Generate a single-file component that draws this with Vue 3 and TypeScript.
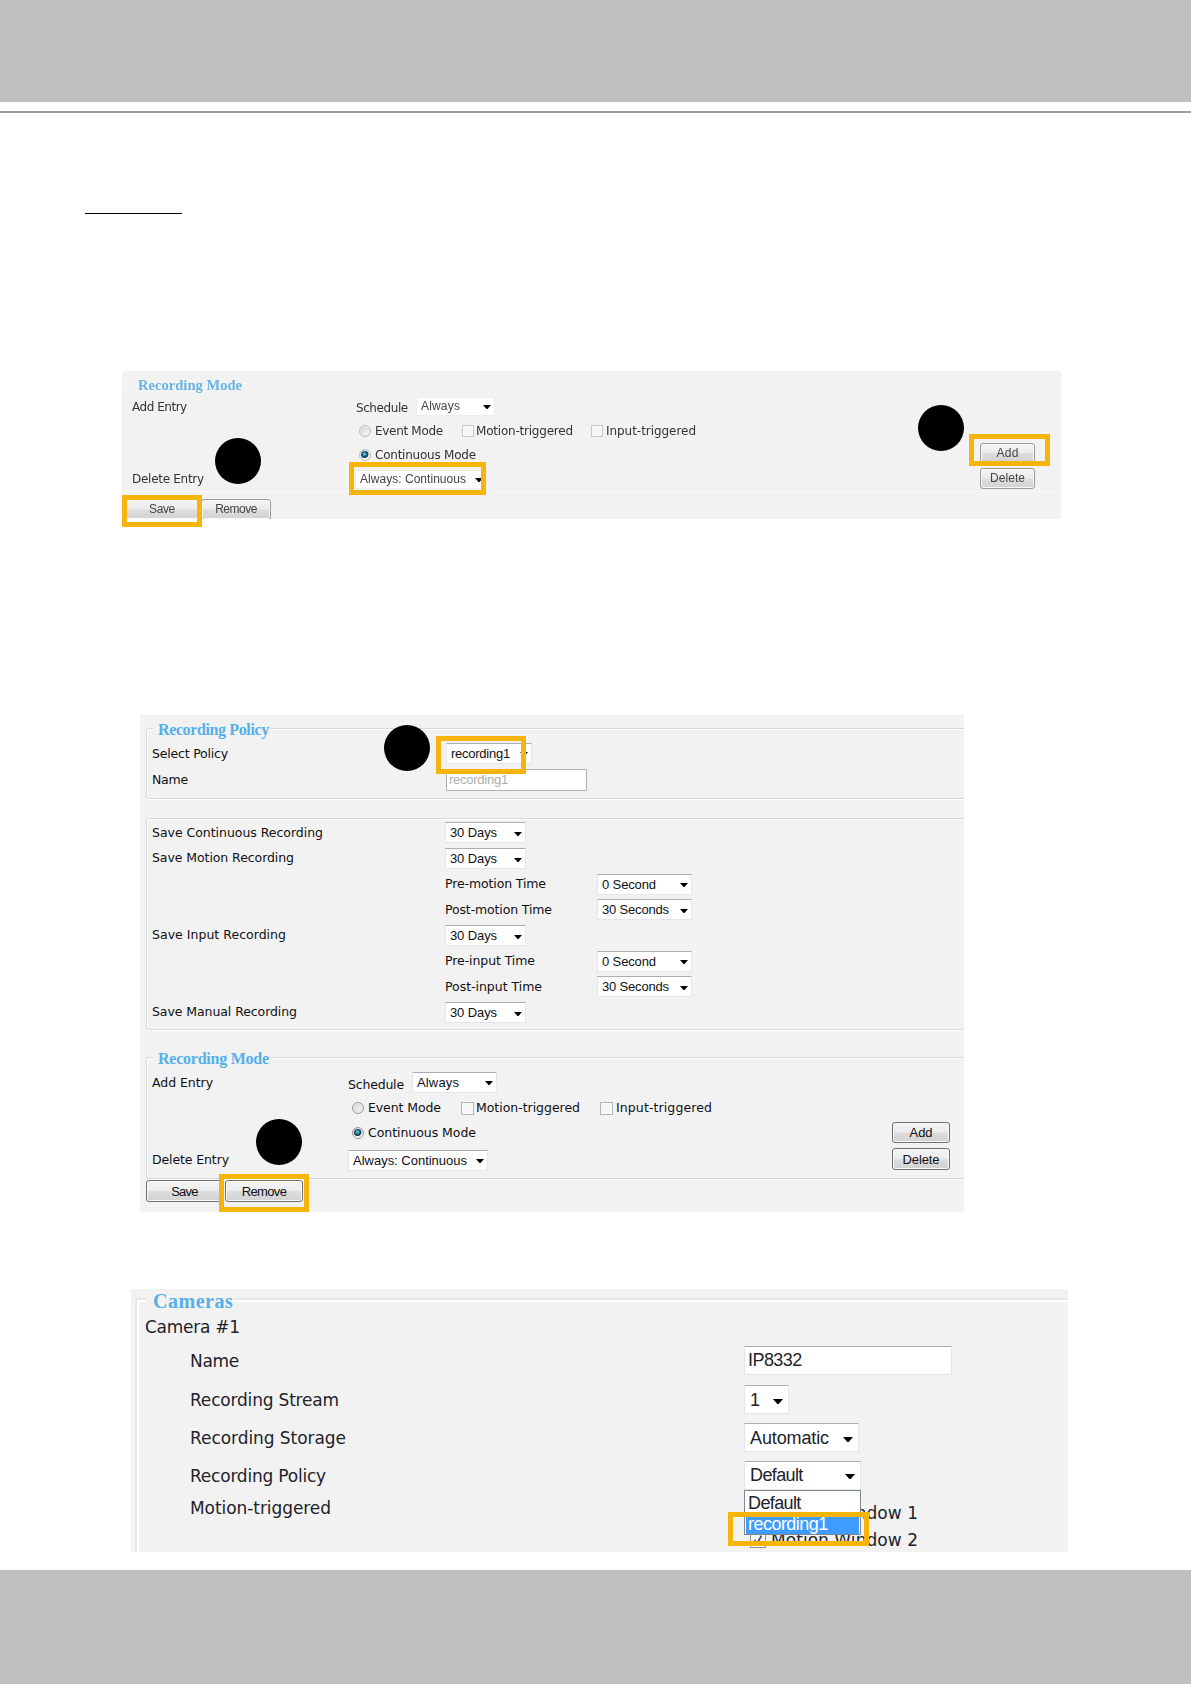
<script setup lang="ts">
type Kind = 'label' | 'select' | 'input' | 'button' | 'radio' | 'check'

interface Item {
  k: Kind
  gap: number
  w: number
  t?: string
  tw?: number
  h?: number
  dy?: number
  on?: boolean
  off?: boolean
}

interface Row { h: number; items: Item[] }
interface Section { cls: string; title?: string; tw?: number; rows: Row[] }
interface Mark { x: number; y: number; w: number; h: number; dot?: boolean }
interface Panel { cls: string; sections: Section[]; marks: Mark[] }

const label = (t: string, gap: number, w: number, dy = 0): Item => ({ k: 'label', t, gap, w, tw: w, dy })
const select = (t: string, gap: number, w: number, tw: number, h = 21, dy = 0): Item => ({ k: 'select', t, gap, w, tw, h, dy })
const button = (t: string, gap: number, w: number, tw: number, h = 21, dy = 0): Item => ({ k: 'button', t, gap, w, tw, h, dy })
const radio = (gap: number, on = false): Item => ({ k: 'radio', gap, w: 12, h: 12, on })
const check = (gap: number, w: number, on = false, dy = 0): Item => ({ k: 'check', gap, w, h: w, on, dy })

const panels: Panel[] = [
  {
    cls: 'mode',
    sections: [
      {
        cls: 'entries', title: 'Recording Mode', tw: 104,
        rows: [
          { h: 24, items: [label('Add Entry', 10, 55), label('Schedule', 169, 52, 1), select('Always', 8, 79, 39, 19, -1)] },
          { h: 24, items: [radio(237), label('Event Mode', 4, 68), check(19, 12), label('Motion-triggered', 2, 97), check(18, 12), label('Input-triggered', 3, 90)] },
          { h: 24, items: [radio(237, true), label('Continuous Mode', 4, 101), button('Add', 504, 55, 22, 20, -2)] },
          { h: 24, items: [label('Delete Entry', 10, 72), select('Always: Continuous', 151, 132, 106, 19), button('Delete', 493, 55, 35, 21, -1)] },
        ],
      },
      { cls: 'actions', rows: [{ h: 20, items: [button('Save', 1, 78, 26, 21), button('Remove', 0, 70, 42, 21)] }] },
    ],
    marks: [
      { x: 93, y: 67, w: 46, h: 46, dot: true },
      { x: 796, y: 34, w: 46, h: 46, dot: true },
      { x: 847, y: 63, w: 81, h: 32 },
      { x: 227, y: 91, w: 137, h: 33 },
      { x: 0, y: 124, w: 80, h: 32 },
    ],
  },
  {
    cls: 'policy',
    sections: [
      {
        cls: 'identity', title: 'Recording Policy', tw: 111,
        rows: [
          { h: 26, items: [label('Select Policy', 5, 76), select('recording1', 218, 86, 59, 21, -1)] },
          { h: 27, items: [label('Name', 5, 36), { k: 'input', t: 'recording1', gap: 258, w: 141, tw: 59, h: 22, dy: -1, off: true }] },
        ],
      },
      {
        cls: 'retention',
        rows: [
          { h: 25.7, items: [label('Save Continuous Recording', 5, 171), select('30 Days', 122, 81, 47)] },
          { h: 25.7, items: [label('Save Motion Recording', 5, 142), select('30 Days', 151, 81, 47)] },
          { h: 25.7, items: [label('Pre-motion Time', 298, 101), select('0 Second', 51, 95, 54)] },
          { h: 25.7, items: [label('Post-motion Time', 298, 107), select('30 Seconds', 45, 95, 67)] },
          { h: 25.7, items: [label('Save Input Recording', 5, 134), select('30 Days', 159, 81, 47)] },
          { h: 25.7, items: [label('Pre-input Time', 298, 90), select('0 Second', 62, 95, 54)] },
          { h: 25.7, items: [label('Post-input Time', 298, 97), select('30 Seconds', 55, 95, 67)] },
          { h: 25.7, items: [label('Save Manual Recording', 5, 145), select('30 Days', 148, 81, 47)] },
        ],
      },
      {
        cls: 'entries', title: 'Recording Mode', tw: 111,
        rows: [
          { h: 25, items: [label('Add Entry', 5, 61), label('Schedule', 135, 56, 2), select('Always', 8, 85, 42, 21, -1)] },
          { h: 25, items: [radio(205), label('Event Mode', 4, 73), check(20, 13), label('Motion-triggered', 2, 104), check(20, 13), label('Input-triggered', 3, 96)] },
          { h: 25, items: [radio(205, true), label('Continuous Mode', 4, 108), button('Add', 416, 58, 23, 21, -1)] },
          { h: 29, items: [label('Delete Entry', 5, 77), select('Always: Continuous', 119, 140, 114), button('Delete', 404, 58, 37, 22, -1)] },
        ],
      },
      { cls: 'actions', rows: [{ h: 22, items: [button('Save', 6, 77, 27, 22, -1), button('Remove', 2, 78, 45, 22, -1)] }] },
    ],
    marks: [
      { x: 244, y: 10, w: 46, h: 46, dot: true },
      { x: 116, y: 404, w: 46, h: 46, dot: true },
      { x: 296, y: 21, w: 90, h: 38 },
      { x: 79, y: 459, w: 90, h: 38 },
    ],
  },
  {
    cls: 'cameras',
    sections: [
      {
        cls: 'camera', title: 'Cameras', tw: 80,
        rows: [
          { h: 33, items: [label('Camera #1', 8, 95)] },
          { h: 34, items: [label('Name', 53, 49), { k: 'input', t: 'IP8332', gap: 505, w: 208, tw: 54, h: 29, dy: -1 }] },
          { h: 43, items: [label('Recording Stream', 53, 149, 1), select('1', 405, 45, 8, 29)] },
          { h: 35, items: [label('Recording Storage', 53, 156), select('Automatic', 398, 115, 79, 29, -1)] },
          { h: 40, items: [label('Recording Policy', 53, 136), select('Default', 418, 117, 53, 29, -1)] },
          { h: 27, items: [label('Motion-triggered', 53, 141, -1), check(419, 16, true, 4), label('Motion Window 1', 5, 147, 4)] },
          { h: 34, items: [check(613, 16, true), label('Motion Window 2', 5, 147)] },
        ],
      },
    ],
    marks: [{ x: 597, y: 223, w: 141, h: 34 }],
  },
]

const px = (n: number) => `${n}px`

const itemStyle = (i: Item) => ({
  marginLeft: px(i.gap),
  width: px(i.w),
  height: i.h ? px(i.h) : undefined,
  top: i.dy ? px(i.dy) : undefined,
})

const markStyle = (m: Mark) => ({ left: px(m.x), top: px(m.y), width: px(m.w), height: px(m.h) })

// Tracks the text so that it fills the given width.
const vFit = {
  mounted(el: HTMLElement, { value }: { value?: number }) {
    const n = (el.textContent ?? '').length
    if (!value || n < 2) return
    const natural = el.getBoundingClientRect().width
    el.style.letterSpacing = `${((value - natural) / (n - 0.5)).toFixed(3)}px`
  },
}
</script>

<template>
  <div class="page">
    <header class="band top"></header>
    <div class="rule"></div>
    <div class="underline"></div>

    <div v-for="p in panels" :key="p.cls" class="figure" :class="p.cls">
      <div class="panel">
        <section v-for="(s, si) in p.sections" :key="si" class="section" :class="s.cls">
          <h2 v-if="s.title" class="title"><span v-fit="s.tw">{{ s.title }}</span></h2>
          <div v-for="(r, ri) in s.rows" :key="ri" class="row" :style="{ height: px(r.h) }">
            <div
              v-for="(i, ii) in r.items"
              :key="ii"
              class="item"
              :class="[i.k, { on: i.on, off: i.off }]"
              :style="itemStyle(i)"
            >
              <span v-if="i.t" v-fit="i.tw" class="text">{{ i.t }}</span>
              <svg v-if="i.k === 'select'" class="arrow" viewBox="0 0 8 4"><path d="M0 0h8L4.5 4h-1z" /></svg>
              <svg v-if="i.k === 'check' && i.on" class="tick" viewBox="0 0 16 16"><path d="M4 8l3 4 5-9" /></svg>
            </div>
          </div>
        </section>
        <ul v-if="p.cls === 'cameras'" class="menu">
          <li><span v-fit="53">Default</span></li>
          <li class="picked"><span v-fit="80">recording1</span></li>
        </ul>
      </div>
      <div v-for="(m, mi) in p.marks" :key="mi" :class="m.dot ? 'dot' : 'frame'" :style="markStyle(m)"></div>
    </div>

    <footer class="band bottom"></footer>
  </div>
</template>

<style>
body { margin: 0; background: #fff; }
</style>

<style scoped>
* { box-sizing: border-box; }
.page {
  width: 1191px;
  height: 1684px;
  display: flex;
  flex-direction: column;
  overflow: hidden;
  background: #fff;
}
.band { background: #c0c0c0; flex: none; }
.band.top { height: 102px; }
.band.bottom { height: 114px; margin-top: 18px; }
.rule { height: 2px; margin-top: 9px; background: #9f9f9f; flex: none; }
.underline { width: 97px; height: 1px; margin: 100px 0 0 85px; background: #000; flex: none; }

.figure { position: relative; flex: none; font-family: "DejaVu Sans", sans-serif; font-size: 12.5px; color: #101014; }
.figure.mode { width: 939px; height: 148px; margin: 157px 0 0 122px; font-size: 12px; color: #444; }
.figure.policy { width: 824px; height: 497px; margin: 196px 0 0 140px; }
.figure.cameras { width: 937px; height: 263px; margin: 77px 0 0 131px; font-size: 17px; color: #22222a; }
.panel { position: relative; width: 100%; height: 100%; background: #f2f2f2; overflow: hidden; display: flex; flex-direction: column; }

.section { position: relative; flex: none; }
.title {
  position: absolute;
  left: 6px;
  top: -8px;
  margin: 0;
  padding: 0 1px 0 5px;
  height: 18px;
  font: bold 16px/18px "Liberation Serif", serif;
  color: #55b0ea;
  background: #f2f2f2;
  white-space: nowrap;
}
.row { display: flex; align-items: center; }
.item { position: relative; flex: none; display: flex; align-items: center; white-space: nowrap; line-height: 1; }
.text { flex: none; }

.select, .input, .button { font-family: "Liberation Sans", Arial, sans-serif; font-size: 13px; }
.select { background: #fff; border: 1px solid #e3e6ea; border-top-color: #abadb3; border-radius: 1px; padding-left: 4px; }
.arrow { position: absolute; right: 3px; top: 50%; width: 8px; height: 4px; margin-top: -1px; fill: #000; }
.input { background: #fff; border: 1px solid #e3e6ea; border-top-color: #abadb3; border-radius: 1px; padding-left: 3px; }
.input.off { color: #adadad; border-color: #b0b0b0; padding-left: 2px; }
.button {
  justify-content: center;
  border: 1px solid #707070;
  border-radius: 3px;
  background: linear-gradient(#f4f4f4, #ececec 48%, #dddddd 52%, #d2d2d2);
  box-shadow: inset 0 0 0 1px #f8f8f8;
}
.radio { border: 1px solid #979797; border-radius: 50%; background: radial-gradient(circle at 65% 65%, #f4f4f4, #c9c9c9); box-shadow: inset 0 0 0 1px #f4f4f4; }
.radio.on { background: radial-gradient(circle at 45% 40%, #5fc0dd 0 8%, #14506e 32%, #123c54 44%, #f0f0f0 54%); }
.check { border: 1px solid #b4b4b4; background: #f6f6f6; box-shadow: inset 0 0 0 1px #fafafa; }
.tick { width: 100%; height: 100%; fill: none; stroke: #3c4a78; stroke-width: 2; }

.mode .panel { border-radius: 2px; }
.mode .entries { margin-top: 12px; height: 109px; padding-top: 10px; border-top: 2px solid #f6f6f6; border-bottom: 1px solid #f8f8f8; }
.mode .title { left: 11px; top: -8px; font-size: 14.5px; height: 16px; line-height: 16px; color: #6ab4e2; }
.mode .row, .mode .title span { filter: blur(0.5px); }
.mode .label { color: #333; }
.mode .select, .mode .button { font-size: 12px; }
.mode .select { border-color: #ededed; }
.mode .button { border-color: #999; }
.mode .check { border-color: #c8c8c8; }
.mode .radio { border-color: #bbb; }
.mode .actions { margin-top: 7px; }

.policy .section:not(.actions) {
  margin-left: 6px;
  border: 1px solid #d5dcdd;
  border-right: 0;
  border-radius: 3px 0 0 3px;
  box-shadow: inset 1px 1px #fff, 0 1px #fff;
}
.policy .identity { margin-top: 13px; height: 71px; padding-top: 12px; }
.policy .retention { margin-top: 19px; height: 212px; padding-top: 1px; }
.policy .entries { margin-top: 27px; height: 122px; padding-top: 12.5px; }
.policy .actions { margin-top: 2px; }

.cameras .camera {
  margin: 9px 0 0 4px;
  height: 270px;
  padding-top: 11px;
  border: solid #e3e8e8;
  border-width: 2px 0 0 2px;
  border-radius: 3px 0 0 0;
  box-shadow: inset 2px 2px #fff;
}
.cameras .title { left: 9px; top: -10px; padding: 0 1px 0 7px; font-size: 20px; height: 22px; line-height: 22px; }
.cameras .select, .cameras .input { font-size: 18px; }
.cameras .select { padding-left: 5px; }
.cameras .arrow { width: 10px; height: 5px; right: 5px; }
.cameras .check { border-color: #8e8f8f; }
.menu {
  position: absolute;
  left: 613px;
  top: 201px;
  width: 117px;
  height: 45px;
  margin: 0;
  padding: 1px;
  list-style: none;
  background: #fff;
  border: 1px solid #7f8790;
  font: 18px/22px "Liberation Sans", Arial, sans-serif;
}
.menu li { height: 21px; padding-left: 2px; white-space: nowrap; }
.menu .picked { background: #3f9cff; color: #fff; line-height: 23px; }

.dot { position: absolute; border-radius: 50%; background: #000; }
.frame { position: absolute; border: 5px solid #f7b50c; }
</style>
